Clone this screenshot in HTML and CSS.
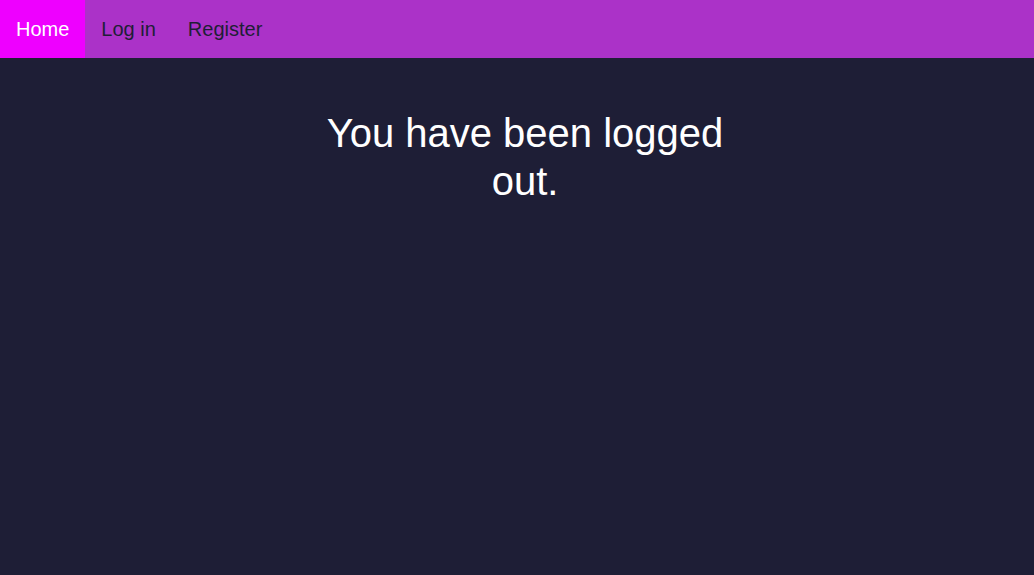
FILE: index.html
```html
<!DOCTYPE html>
<html lang="en">
<head>
<meta charset="utf-8">
<title>Logged out</title>
<link rel="stylesheet" href="styles.css">
</head>
<body>
<nav class="navbar">
  <a class="nav-link active" href="#">Home</a>
  <a class="nav-link" href="#">Log in</a>
  <a class="nav-link" href="#">Register</a>
</nav>
<main class="content">
  <h1 class="title">You have been logged out.</h1>
</main>
</body>
</html>
```
FILE: styles.css
```css
html, body {
  margin: 0;
  padding: 0;
  height: 100%;
}
body {
  background: #1e1e36;
  font-family: "Liberation Sans", Arial, sans-serif;
}
.navbar {
  display: flex;
  height: 58px;
  background: #ab32c8;
}
.nav-link {
  display: flex;
  align-items: center;
  padding: 0 16px;
  font-size: 20px;
  color: #1e1e36;
  text-decoration: none;
}
.nav-link.active {
  background: #ee00ff;
  color: #ffffff;
}
.content {
  padding-left: 16px;
}
.title {
  max-width: 420px;
  margin: 51px auto 0;
  text-align: center;
  color: #ffffff;
  font-size: 40px;
  font-weight: normal;
  line-height: 48px;
}
```
